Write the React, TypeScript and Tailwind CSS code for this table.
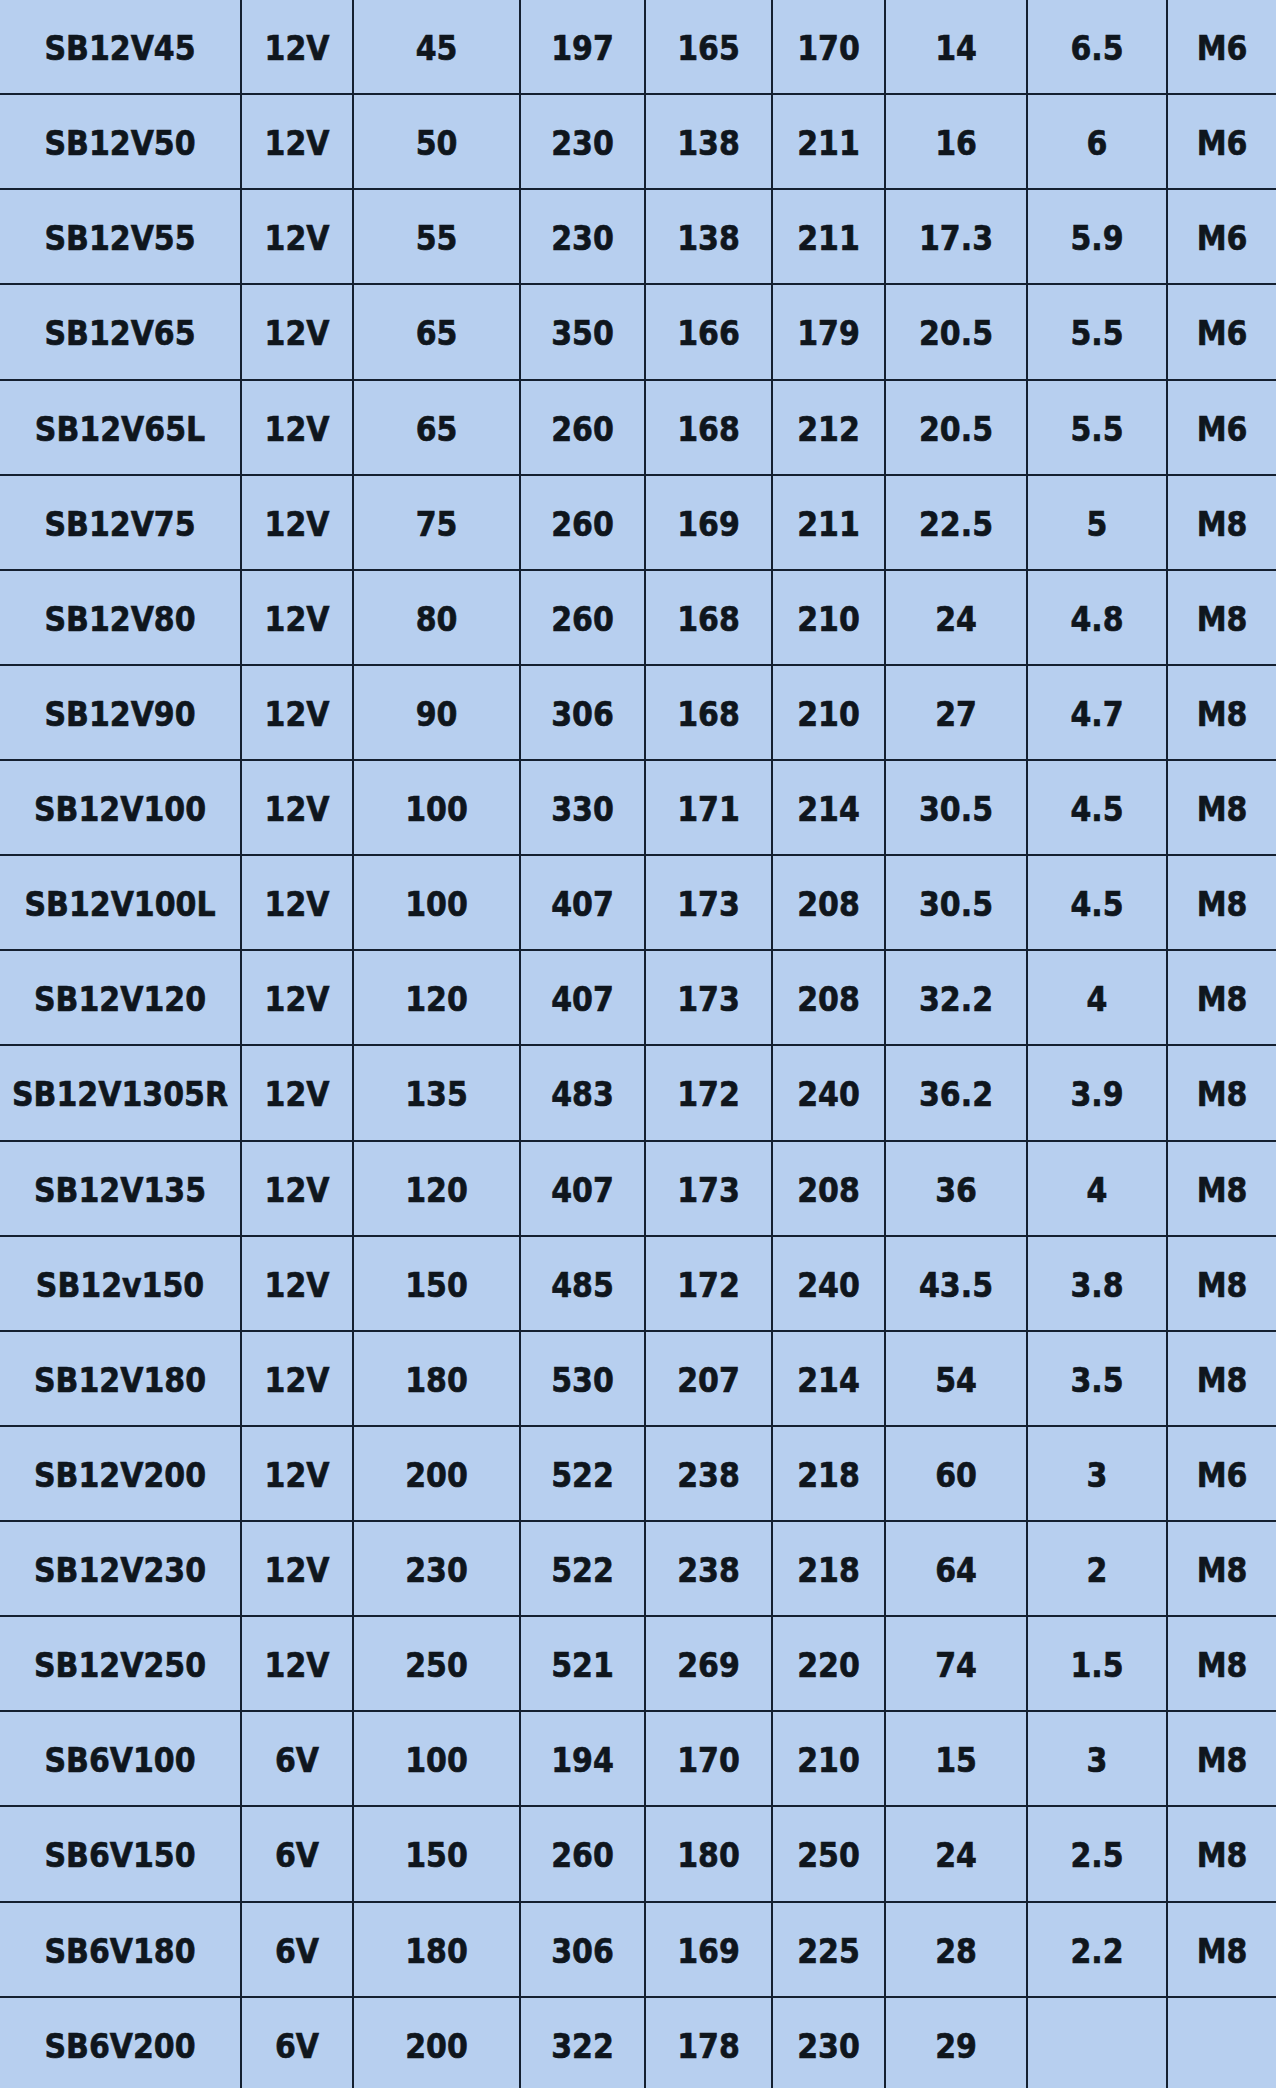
import React from 'react';

// battery spec table: model, voltage, capacity, L, W, H, weight, resistance, terminal
const rows: string[][] = [
  ['SB12V45', '12V', '45', '197', '165', '170', '14', '6.5', 'M6'],
  ['SB12V50', '12V', '50', '230', '138', '211', '16', '6', 'M6'],
  ['SB12V55', '12V', '55', '230', '138', '211', '17.3', '5.9', 'M6'],
  ['SB12V65', '12V', '65', '350', '166', '179', '20.5', '5.5', 'M6'],
  ['SB12V65L', '12V', '65', '260', '168', '212', '20.5', '5.5', 'M6'],
  ['SB12V75', '12V', '75', '260', '169', '211', '22.5', '5', 'M8'],
  ['SB12V80', '12V', '80', '260', '168', '210', '24', '4.8', 'M8'],
  ['SB12V90', '12V', '90', '306', '168', '210', '27', '4.7', 'M8'],
  ['SB12V100', '12V', '100', '330', '171', '214', '30.5', '4.5', 'M8'],
  ['SB12V100L', '12V', '100', '407', '173', '208', '30.5', '4.5', 'M8'],
  ['SB12V120', '12V', '120', '407', '173', '208', '32.2', '4', 'M8'],
  ['SB12V1305R', '12V', '135', '483', '172', '240', '36.2', '3.9', 'M8'],
  ['SB12V135', '12V', '120', '407', '173', '208', '36', '4', 'M8'],
  ['SB12v150', '12V', '150', '485', '172', '240', '43.5', '3.8', 'M8'],
  ['SB12V180', '12V', '180', '530', '207', '214', '54', '3.5', 'M8'],
  ['SB12V200', '12V', '200', '522', '238', '218', '60', '3', 'M6'],
  ['SB12V230', '12V', '230', '522', '238', '218', '64', '2', 'M8'],
  ['SB12V250', '12V', '250', '521', '269', '220', '74', '1.5', 'M8'],
  ['SB6V100', '6V', '100', '194', '170', '210', '15', '3', 'M8'],
  ['SB6V150', '6V', '150', '260', '180', '250', '24', '2.5', 'M8'],
  ['SB6V180', '6V', '180', '306', '169', '225', '28', '2.2', 'M8'],
  ['SB6V200', '6V', '200', '322', '178', '230', '29', '', ''],
];

export default function App() {
  return (
    <div className="w-[1276px] h-[2088px] overflow-hidden bg-[#b7cfef] font-['DejaVu_Sans',sans-serif] font-bold text-[#0f161d]">
      {rows.map((row, i) => (
        <div
          key={i}
          className="grid grid-cols-[242px_112px_167px_125px_127px_113px_142px_140px_108px] h-[95.14px] border-b-2 border-[#142030]"
        >
          {row.map((cell, j) => (
            <div
              key={j}
              className={`flex items-center justify-center pt-[3px] text-[30px] leading-none ${
                j < row.length - 1 ? 'border-r-2 border-[#142030]' : ''
              }`}
            >
              <span className="inline-block scale-y-115 whitespace-nowrap [-webkit-text-stroke:0.6px_#0f161d]">
                {cell}
              </span>
            </div>
          ))}
        </div>
      ))}
    </div>
  );
}
